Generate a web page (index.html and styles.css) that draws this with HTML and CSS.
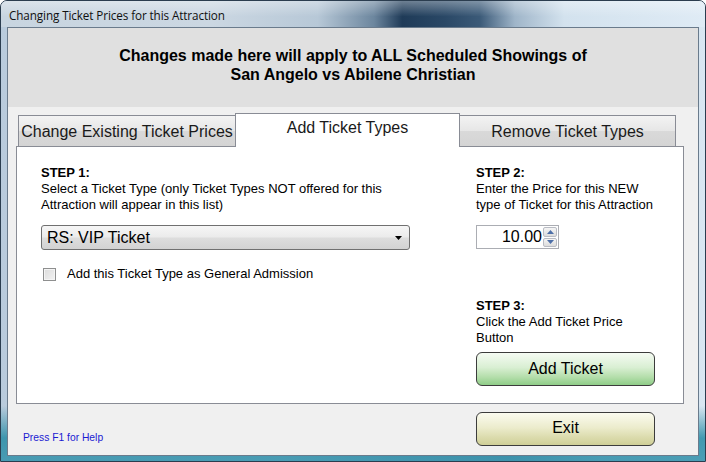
FILE: index.html
```html
<!DOCTYPE html>
<html>
<head>
<meta charset="utf-8">
<link rel="stylesheet" href="styles.css">
</head>
<body>
<div class="window">
  <div class="titlebar"><span class="title">Changing Ticket Prices for this Attraction</span></div>
  <div class="client">
    <div class="header">
      <div>Changes made here will apply to ALL Scheduled Showings of</div>
      <div>San Angelo vs Abilene Christian</div>
    </div>
    <div class="tabs">
      <div class="tabstrip">
        <div class="tab tab1">Change Existing Ticket Prices</div>
        <div class="tab tab-sel">Add Ticket Types</div>
        <div class="tab tab3">Remove Ticket Types</div>
      </div>
      <div class="panel">
        <div class="col-left">
          <div class="step">STEP 1:</div>
          <div class="txt">Select a Ticket Type (only Ticket Types NOT offered for this<br>Attraction will appear in this list)</div>
          <div class="combo">
            <span>RS: VIP Ticket</span>
            <svg class="combo-arrow" width="7" height="4" viewBox="0 0 7 4"><path d="M0 0h7L3.5 4z" fill="#000"/></svg>
          </div>
          <label class="check-row">
            <span class="checkbox"></span>
            <span class="txt">Add this Ticket Type as General Admission</span>
          </label>
        </div>
        <div class="col-right">
          <div class="step">STEP 2:</div>
          <div class="txt">Enter the Price for this NEW<br>type of Ticket for this Attraction</div>
          <div class="numeric">
            <span class="num-val">10.00</span>
            <span class="spin">
              <span class="spin-btn"><svg width="7" height="4" viewBox="0 0 7 4"><path d="M0 4h7L3.5 0z" fill="#4d6fa8"/></svg></span>
              <span class="spin-btn"><svg width="7" height="4" viewBox="0 0 7 4"><path d="M0 0h7L3.5 4z" fill="#4d6fa8"/></svg></span>
            </span>
          </div>
          <div class="step step3">STEP 3:</div>
          <div class="txt">Click the Add Ticket Price<br>Button</div>
          <div class="btn btn-green">Add Ticket</div>
        </div>
      </div>
    </div>
    <div class="footer">
      <div class="help">Press F1 for Help</div>
      <div class="btn btn-khaki">Exit</div>
    </div>
  </div>
</div>
</body>
</html>
```

FILE: styles.css
```css
html, body {
  margin: 0;
  padding: 0;
  background: #ffffff;
}

.window {
  width: 706px;
  height: 462px;
  box-sizing: border-box;
  border: 1px solid #2b3d4f;
  border-radius: 7px 7px 0 0;
  padding: 0 6px 5px 6px;
  display: flex;
  flex-direction: column;
  background:
    linear-gradient(180deg, rgba(255,255,255,0) 0%, rgba(255,255,255,0) 88%, rgba(40,140,165,0.85) 95%, rgba(60,150,175,0.9) 100%),
    linear-gradient(90deg, #b9cbdc 0%, #c9d8e5 40%, #8ea6bd 55%, #5d7c9a 72%, #c3d5e4 85%, #d9e7f2 100%);
  font-family: "Liberation Sans", Arial, sans-serif;
  overflow: hidden;
}

.titlebar {
  height: 26px;
  flex: none;
  display: flex;
  align-items: center;
  margin: 0 -6px;
  padding-left: 8px;
  background:
    linear-gradient(180deg, rgba(255,255,255,0.35) 0%, rgba(255,255,255,0) 60%),
    linear-gradient(90deg, #c8d5e0 0%, #cbd7e2 30%, #b7c8d7 45%, #6c869e 53%, #1f3b58 57%, #2a4866 63%, #3b5a78 68%, #9fb5c9 73%, #d3e2ee 80%, #dfebf5 100%);
}

.title {
  font-family: "Open Sans", "Noto Sans", sans-serif;
  font-size: 11.7px;
  color: #101010;
  letter-spacing: -0.1px;
  position: relative;
  top: 1px;
}

.client {
  flex: 1;
  background: #f0f0f0;
  border: 1px solid #6a7b8c;
  display: flex;
  flex-direction: column;
  min-height: 0;
}

.header {
  height: 79px;
  flex: none;
  background: #e0e0e0;
  box-sizing: border-box;
  padding-top: 18px;
  text-align: center;
  font-weight: bold;
  font-size: 16px;
  line-height: 19px;
  color: #000;
}

.tabs {
  margin: 6px 0 0 8px;
  width: 668px;
}

.tabstrip {
  height: 33px;
  display: flex;
  align-items: flex-end;
  position: relative;
  z-index: 2;
}

.tab {
  box-sizing: border-box;
  height: 31px;
  border: 1px solid #898c95;
  border-bottom: none;
  background: linear-gradient(180deg, #f3f3f3 0%, #e6e6e6 50%, #d9d9d9 51%, #d4d4d4 100%);
  font-size: 16px;
  color: #1a1a1a;
  display: flex;
  align-items: center;
  justify-content: center;
  padding-top: 1px;
}

.tab1 {
  margin-left: 2px;
  width: 218px;
}

.tab-sel {
  width: 225px;
  height: 34px;
  margin-bottom: -1px;
  margin-left: -1px;
  background: #ffffff;
  padding-top: 0;
  padding-bottom: 6px;
}

.tab3 {
  width: 217px;
  margin-left: -1px;
}

.panel {
  box-sizing: border-box;
  height: 258px;
  background: #ffffff;
  border: 1px solid #898c95;
  display: grid;
  grid-template-columns: 435px 1fr;
  padding: 18px 0 0 24px;
  position: relative;
  z-index: 1;
}

.step {
  font-weight: bold;
  font-size: 13px;
  line-height: 16px;
  color: #000;
}

.txt {
  font-size: 13px;
  line-height: 16px;
  color: #000;
}

.combo {
  margin-top: 12px;
  width: 369px;
  height: 25px;
  box-sizing: border-box;
  border: 1px solid #707070;
  border-radius: 3px;
  background: linear-gradient(180deg, #f6f6f6 0%, #ebebeb 48%, #dddddd 52%, #d2d2d2 100%);
  display: flex;
  align-items: center;
  justify-content: space-between;
  padding: 0 7px 0 5px;
  font-size: 16px;
  color: #000;
}

.check-row {
  display: flex;
  align-items: center;
  margin-top: 16px;
  margin-left: 2px;
}

.checkbox {
  width: 13px;
  height: 13px;
  box-sizing: border-box;
  border: 1px solid #8e8f8f;
  background: linear-gradient(135deg, #dcdcdc 0%, #f2f2f2 100%);
  box-shadow: inset 0 0 0 1px #f4f4f4;
  margin-right: 11px;
}

.numeric {
  margin-top: 12px;
  width: 83px;
  height: 24px;
  box-sizing: border-box;
  border: 1px solid #abadb3;
  background: #fff;
  display: flex;
  align-items: stretch;
}

.num-val {
  flex: 1;
  text-align: right;
  font-size: 16px;
  line-height: 22px;
  color: #000;
  padding-right: 1px;
}

.spin {
  width: 14px;
  display: flex;
  flex-direction: column;
  padding: 1px 1px 1px 0;
  gap: 1px;
}

.spin-btn {
  flex: 1;
  border: 1px solid #b9bcc4;
  border-radius: 2px;
  background: linear-gradient(180deg, #f5f5f5, #dcdcdc);
  display: flex;
  align-items: center;
  justify-content: center;
}

.step3 {
  margin-top: 49px;
}

.btn {
  box-sizing: border-box;
  width: 179px;
  height: 34px;
  border: 1px solid #3c3c3c;
  border-radius: 6px;
  display: flex;
  align-items: center;
  justify-content: center;
  font-size: 16px;
  color: #000;
}

.btn-green {
  margin-top: 6px;
  background: linear-gradient(180deg, #f5fbf3 0%, #d9efd3 45%, #b4deab 75%, #8fcd88 100%);
}

.btn-khaki {
  background: linear-gradient(180deg, #fbfbef 0%, #ececcd 45%, #dcdcae 75%, #cfcf97 100%);
  padding-bottom: 3px;
}

.footer {
  display: flex;
  align-items: flex-end;
  padding-top: 8px;
}

.help {
  width: 468px;
  padding-left: 15px;
  box-sizing: border-box;
  font-family: "Liberation Sans", Arial, sans-serif;
  font-size: 10.3px;
  line-height: 14px;
  color: #1a1ad2;
  margin-bottom: 1px;
}
```
